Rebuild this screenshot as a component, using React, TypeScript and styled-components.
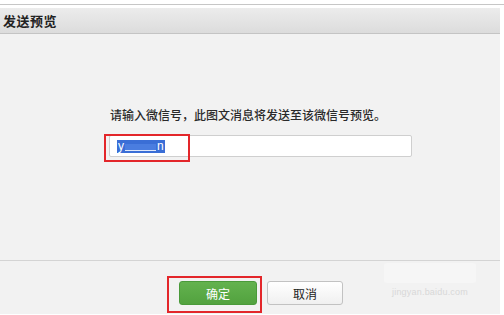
import React from "react";
import styled, { createGlobalStyle } from "styled-components";

const Global = createGlobalStyle`
  html, body { margin: 0; padding: 0; background: #ffffff; }
  body { font-family: "Noto Sans CJK SC", "Liberation Sans", sans-serif; }
  * { box-sizing: border-box; }
`;

const Page = styled.div`
  position: relative;
  width: 504px;
  height: 315px;
  overflow: hidden;
  background: #ffffff;
  padding-top: 4px;
`;

const TopRule = styled.div`
  height: 1px;
  background: #c6c6c6;
  margin-bottom: 3px;
`;

const Dialog = styled.div`
  width: 500px;
  display: flex;
  flex-direction: column;
  background: #f2f2f2;
`;

const Header = styled.div`
  height: 26px;
  display: flex;
  align-items: center;
  padding-left: 3px;
  background: linear-gradient(#ececec, #dcdcdc);
  border-bottom: 1px solid #c4c4c4;
`;

const Title = styled.h3`
  margin: 0;
  font-size: 13px;
  font-weight: 700;
  color: #222;
  letter-spacing: 0.5px;
`;

const Body = styled.div`
  height: 227px;
  display: flex;
  flex-direction: column;
  padding: 73px 0 0 109px;
  border-bottom: 1px solid #d4d4d4;
`;

const Prompt = styled.p`
  margin: 0 0 12px 1px;
  font-size: 12px;
  line-height: 16px;
  color: #2a2a2a;
  font-weight: 500;
`;

const InputBox = styled.div`
  width: 303px;
  height: 22px;
  background: #ffffff;
  border: 1px solid #cfcfcf;
  border-radius: 2px;
  display: flex;
  align-items: center;
  padding-left: 7px;
`;

const Selected = styled.span`
  display: inline-flex;
  align-items: flex-end;
  height: 13px;
  background: #3a6ed6;
  color: #ffffff;
  font-family: "Liberation Sans", sans-serif;
  font-size: 12px;
  line-height: 13px;
  padding: 0 1px;
`;

const Masked = styled.span`
  display: inline-block;
  width: 31px;
  height: 7px;
  margin: 0 1px 2px;
  background: #4a7de0;
  border-bottom: 1px solid #dfe8fa;
`;

const Footer = styled.div`
  height: 53px;
  display: flex;
  align-items: flex-start;
  gap: 10px;
  padding: 20px 0 0 179px;
`;

const Button = styled.button<{ $primary?: boolean }>`
  width: ${(p) => (p.$primary ? "78px" : "76px")};
  height: 24px;
  border-radius: 3px;
  font-family: "Noto Sans CJK SC", sans-serif;
  font-size: 12px;
  padding: 0;
  cursor: pointer;
  color: ${(p) => (p.$primary ? "#ffffff" : "#222222")};
  border: 1px solid ${(p) => (p.$primary ? "#4a9a3a" : "#c2c2c2")};
  background: ${(p) =>
    p.$primary
      ? "linear-gradient(#63b24e, #52a23f)"
      : "linear-gradient(#ffffff, #f0f0f0)"};
`;

const Annotation = styled.div<{ $x: number; $y: number; $w: number; $h: number }>`
  position: absolute;
  left: ${(p) => p.$x}px;
  top: ${(p) => p.$y}px;
  width: ${(p) => p.$w}px;
  height: ${(p) => p.$h}px;
  border: 2px solid #e3262a;
  pointer-events: none;
`;

const Watermark = styled.div`
  position: absolute;
  left: 384px;
  top: 263px;
  width: 92px;
  display: flex;
  flex-direction: column;
  align-items: center;
  gap: 4px;
  pointer-events: none;
`;

const WatermarkLogo = styled.div`
  width: 92px;
  height: 20px;
  background: #f6f6f6;
  border-radius: 3px;
`;

const WatermarkText = styled.span`
  font-family: "Liberation Sans", sans-serif;
  font-size: 9px;
  color: #d8d8d8;
  letter-spacing: 0.2px;
`;

export default function App() {
  return (
    <>
      <Global />
      <Page>
        <TopRule />
        <Dialog>
          <Header>
            <Title>发送预览</Title>
          </Header>
          <Body>
            <Prompt>请输入微信号，此图文消息将发送至该微信号预览。</Prompt>
            <InputBox>
              <Selected>
                y<Masked />n
              </Selected>
            </InputBox>
          </Body>
          <Footer>
            <Button $primary>确定</Button>
            <Button>取消</Button>
          </Footer>
        </Dialog>
        <Annotation $x={104} $y={134} $w={86} $h={28} />
        <Annotation $x={167} $y={276} $w={95} $h={37} />
        <Watermark>
          <WatermarkLogo />
          <WatermarkText>jingyan.baidu.com</WatermarkText>
        </Watermark>
      </Page>
    </>
  );
}
